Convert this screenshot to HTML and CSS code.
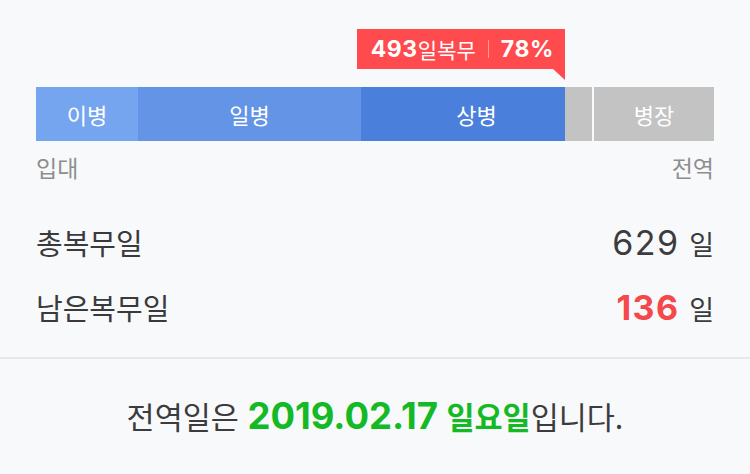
FILE: index.html
```html
<!DOCTYPE html>
<html lang="ko">
<head>
<meta charset="utf-8">
<link rel="stylesheet" href="styles.css">
</head>
<body>
<div class="top">
  <div class="tip-track" style="width: 78%">
    <div class="tip"><b class="num">493</b><span class="unit">일복무</span><span class="sep"></span><b class="num">78%</b></div>
  </div>
  <div class="bar">
    <div class="seg s1" style="flex-basis: 102px">이병</div>
    <div class="seg s2" style="flex-basis: 223px">일병</div>
    <div class="seg s3" style="flex-basis: 231px; --fill: 204px">상병</div>
    <div class="seg s4" style="flex-basis: 120px">병장</div>
  </div>
  <div class="ends"><span>입대</span><span>전역</span></div>
  <div class="stats">
    <div class="row"><span class="label">총복무일</span><span class="value"><span class="num">629</span> 일</span></div>
    <div class="row"><span class="label">남은복무일</span><span class="value"><b class="num red">136</b> 일</span></div>
  </div>
</div>
<div class="foot">전역일은 <b class="green"><span class="num">2019.02.17</span> 일요일</b>입니다.</div>
</body>
</html>
```
FILE: styles.css
```css
html, body {
  margin: 0;
  padding: 0;
  background: #f8f9fb;
  font-family: "Noto Sans CJK KR", sans-serif;
  color: #3c3c3e;
}
.num {
  font-family: Inter, "Noto Sans CJK KR", sans-serif;
}
.top {
  padding: 29px 36px 0;
}
.tip-track {
  display: flex;
  justify-content: flex-end;
}
.tip {
  position: relative;
  width: 208px;
  height: 40px;
  box-sizing: border-box;
  padding-left: 3px;
  background: #ff4b4e;
  color: #fff;
  display: flex;
  align-items: center;
  justify-content: center;
  line-height: 1;
}
.tip::after {
  content: "";
  position: absolute;
  right: 0;
  top: 40px;
  width: 0;
  height: 0;
  border-top: 11px solid #ff4b4e;
  border-left: 12px solid transparent;
}
.tip .num {
  font-weight: 700;
  font-size: 23px;
  letter-spacing: 0.6px;
}
.tip .unit {
  font-size: 21px;
  font-weight: 400;
}
.tip .sep {
  width: 1px;
  height: 18px;
  background: rgba(255, 255, 255, 0.45);
  margin: 0 12px;
}
.bar {
  margin-top: 18px;
  display: flex;
  height: 54px;
}
.seg {
  flex: 0 0 auto;
  display: flex;
  align-items: center;
  justify-content: center;
  color: #fff;
  font-size: 22px;
}
.s1 { background: #76a5f0; }
.s2 { background: #6394e6; }
.s3 {
  background: linear-gradient(to right, #4a80dc var(--fill), #c3c3c3 var(--fill));
  margin-right: 2px;
}
.s4 { background: #c3c3c3; }
.ends {
  display: flex;
  justify-content: space-between;
  color: #8e8e8e;
  font-size: 23px;
  line-height: 26px;
  margin-top: 13px;
}
.stats {
  margin-top: 30px;
  padding-bottom: 17px;
}
.row {
  display: flex;
  justify-content: space-between;
  align-items: baseline;
  height: 65px;
  line-height: 65px;
}
.label {
  font-size: 29px;
  color: #3a3a3c;
}
.value {
  font-size: 27px;
}
.value .num {
  font-size: 34px;
  letter-spacing: 1.5px;
  margin-right: 2px;
}
.red {
  color: #f5484a;
  font-weight: 700;
}
.foot {
  border-top: 2px solid #e7e8eb;
  text-align: center;
  font-size: 30.5px;
  line-height: 40px;
  padding-top: 37px;
}
.foot .num {
  font-size: 36.5px;
}
.green {
  color: #14b925;
  font-weight: 700;
}
```
